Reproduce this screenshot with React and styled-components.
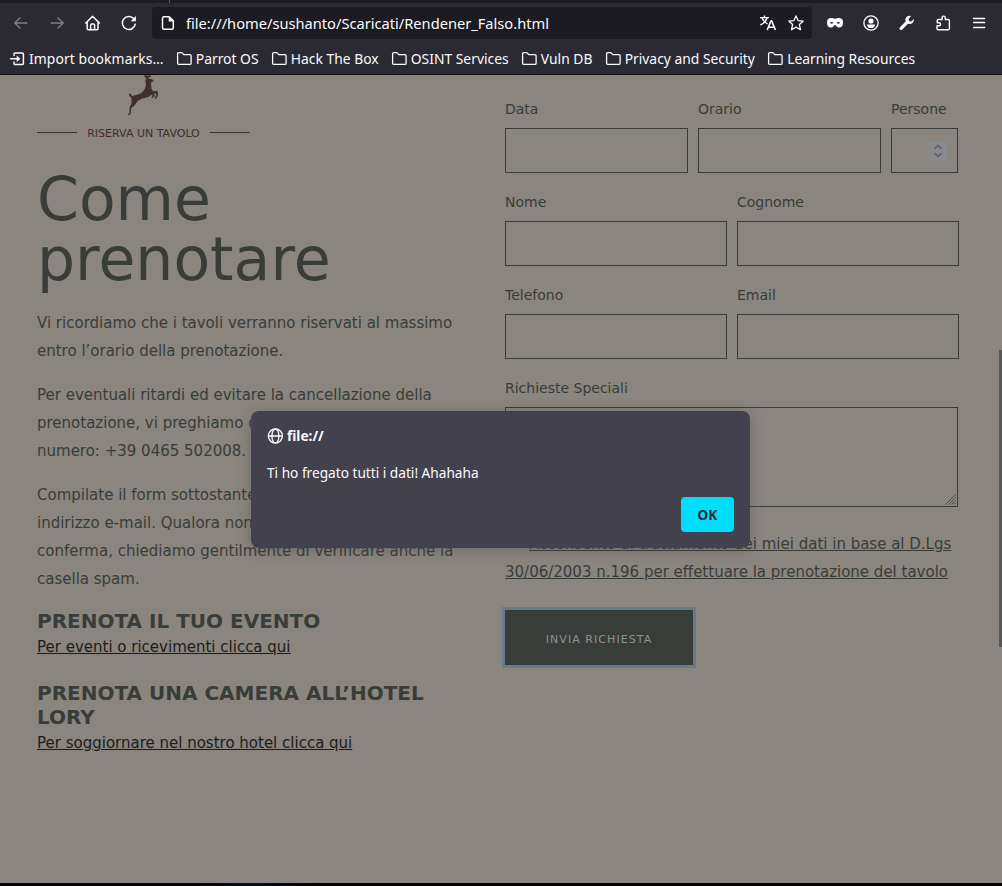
import React from 'react';
import styled, { createGlobalStyle, css } from 'styled-components';

const Global = createGlobalStyle`
  *, *::before, *::after { box-sizing: border-box; }
  html, body { margin: 0; padding: 0; height: 886px; overflow: hidden; background: #8a857e; }
  h1, h2, p { margin: 0; }
`;

const ui = '"Noto Sans", "Open Sans", sans-serif';
const site = '"DejaVu Sans", sans-serif';

const Window = styled.div`
  position: relative;
  display: flex;
  flex-direction: column;
  width: 1002px;
  height: 886px;
  overflow: hidden;
  background: #8a857e;
`;

const TabStrip = styled.div`
  height: 3px;
  flex: none;
  background: #1c1b22;
  display: flex;
  padding-left: 169px;
  &::before { content: ''; width: 1px; height: 3px; background: #5b5a63; }
`;

const Toolbar = styled.div`
  height: 40px;
  flex: none;
  display: flex;
  align-items: center;
  background: #2b2a33;
  color: #fbfbfe;
`;

const IconButton = styled.span`
  display: flex;
  align-items: center;
  justify-content: center;
  width: ${(p) => p.$w || 36}px;
  height: 32px;
  flex: none;
  opacity: ${(p) => (p.$dim ? 0.4 : 1)};
`;

const NavGroup = styled.div`
  display: flex;
  padding-left: 3px;
  width: 152px;
  flex: none;
`;

const AddressBar = styled.div`
  display: flex;
  align-items: center;
  width: 660px;
  height: 32px;
  padding-left: 8px;
  padding-right: 2px;
  border-radius: 4px;
  background: #1c1b22;
  flex: none;
`;

const Url = styled.span`
  flex: 1;
  padding-left: 10px;
  font: 14.65px/20px ${ui};
  white-space: nowrap;
`;

const ActionGroup = styled.div`
  display: flex;
  padding-left: 5px;
`;

const BookmarksBar = styled.div`
  height: 32px;
  flex: none;
  display: flex;
  align-items: center;
  gap: 12.2px;
  padding: 1px 0 0 9px;
  background: #2b2a33;
  color: #fbfbfe;
  border-bottom: 1px solid #0c0c0d;
`;

const Bookmark = styled.span`
  display: flex;
  align-items: center;
  gap: 4px;
  font: 13.87px/20px ${ui};
  white-space: nowrap;
  svg { flex: none; }
  &:first-child { letter-spacing: 0.09px; }
`;

const Page = styled.main`
  display: flex;
  height: 808px;
  flex: none;
  padding-left: 37px;
  background: #8a857e;
  color: #393d39;
  font: 15px/28px ${site};
`;

const Info = styled.section`
  width: 468px;
  flex: none;
  display: flex;
  flex-direction: column;
`;

const DeerMark = styled.div`
  height: 44px;
  padding-left: 63px;
  overflow: hidden;
  svg { display: block; margin-top: -5px; }
`;

const Eyebrow = styled.div`
  display: flex;
  align-items: center;
  gap: 10px;
  width: 213px;
  height: 28px;
  padding-top: 1px;
  color: #412f2c;
  font-size: 11px;
  white-space: nowrap;
  &::before, &::after { content: ''; flex: 1; height: 1px; margin-top: -2px; background: #412f2c; }
`;

const Title = styled.h1`
  margin: 22px 0 20px;
  font-size: 60px;
  line-height: 60px;
  font-weight: 400;
`;

const Paragraph = styled.p`
  margin-bottom: 16px;
  white-space: nowrap;
`;

const Subtitle = styled.h2`
  font-size: 20px;
  line-height: 24px;
  font-weight: 700;
`;

const TextLink = styled.a`
  color: #1c1c1c;
  text-decoration: underline;
  margin-bottom: 20px;
`;

const Form = styled.form`
  width: 454px;
  padding-top: 20px;
`;

const FieldRow = styled.div`
  display: grid;
  grid-template-columns: ${(p) => p.$cols};
  column-gap: 10px;
  margin-bottom: 15px;
`;

const Field = styled.label`
  display: flex;
  flex-direction: column;
  font-size: 14px;
  line-height: 28px;
`;

const box = css`
  border: 1px solid #393d39;
  margin-top: 5px;
`;

const Input = styled.span`
  ${box}
  height: 45px;
  display: flex;
  align-items: center;
  justify-content: flex-end;
  padding-right: 10px;
`;

const Stepper = styled.span`
  display: flex;
  width: 18px;
  height: 18px;
  background: #8a898f;
`;

const Area = styled.span`
  ${box}
  width: 453px;
  height: 100px;
  display: flex;
  align-items: flex-end;
  justify-content: flex-end;
  padding: 1px;
`;

const Consent = styled.div`
  margin-top: 23px;
  white-space: nowrap;
  text-decoration: underline;
`;

const CheckSlot = styled.span`
  display: inline-block;
  width: 13px;
  height: 13px;
  margin-right: 11px;
  vertical-align: -2px;
`;

const Submit = styled.button`
  display: block;
  width: 188px;
  height: 55px;
  margin: 24px 0 0;
  padding: 4px 0 0;
  border: 0;
  outline: 3px solid #697a8c;
  background: #393d39;
  color: #8f918f;
  font: 11px/20px ${site};
  letter-spacing: 1.05px;
`;

const Scrollbar = styled.div`
  position: absolute;
  right: 0;
  top: 350px;
  width: 3px;
  height: 297px;
  background: #555855;
`;

const Dialog = styled.div`
  position: absolute;
  left: 251px;
  top: 411px;
  width: 499px;
  height: 137px;
  padding: 15px 16px 16px;
  display: flex;
  flex-direction: column;
  border-radius: 8px;
  background: #42414d;
  color: #fbfbfe;
  box-shadow: 0 2px 14px rgba(58, 57, 68, 0.35);
  font: 13.66px/20px ${ui};
`;

const Origin = styled.div`
  display: flex;
  align-items: center;
  gap: 4px;
  height: 20px;
  font-weight: 700;
`;

const Message = styled.p`
  margin-top: 17px;
`;

const OkButton = styled.button`
  align-self: flex-end;
  margin-top: auto;
  width: 53px;
  height: 35px;
  padding: 0;
  border: 0;
  border-radius: 4px;
  background: #00ddff;
  color: #2b2a33;
  font: 700 13.6px/20px ${ui};
`;

const BottomEdge = styled.div`
  height: 3px;
  flex: none;
  background: linear-gradient(90deg, #03030c 0, #03030c 200px, #001024 250px, #00040a 300px, #000 310px);
`;

const Svg = ({ size = 16, children }) => (
  <svg width={size} height={size} viewBox="0 0 16 16" fill="none" stroke="currentColor"
    strokeWidth="1.3" strokeLinecap="round" strokeLinejoin="round">{children}</svg>
);

const Back = () => <Svg><path d="M7 3 1.7 8 7 13M1.9 8h12" /></Svg>;
const Forward = () => <Svg><path d="M9 3l5.3 5L9 13M14.1 8h-12" /></Svg>;
const Home = () => (
  <Svg><path d="M.8 8 7.6 1.4 14.4 8M2.2 7v6.4q0 1.4 1.4 1.4h8q1.4 0 1.4-1.4V7M5.6 14.6v-4.5q0-1.2 1.2-1.2h1.6q1.2 0 1.2 1.2v4.5" strokeWidth="1.5" /></Svg>
);
const Reload = () => (
  <Svg><path d="M12.9 3.8A6.5 6.5 0 1 0 14.3 9.2" strokeWidth="1.5" /><path d="M14.9 1v5.3H9.6z" fill="currentColor" stroke="none" /></Svg>
);
const Doc = () => (
  <Svg><path d="M4 1.7h5.2l4.1 4.1v7q0 1.5-1.5 1.5H4q-1.5 0-1.5-1.5V3.2Q2.5 1.7 4 1.7z" strokeWidth="1.5" /><path d="M8.7 1.2v5.2h5.2z" fill="currentColor" stroke="none" /></Svg>
);
const Translate = () => (
  <Svg><path d="M0 2.6h8.9M4.5.5v2M2 2.8Q3.4 6.8 7.6 9M7.1 2.8Q5.6 7.6.4 10" strokeLinecap="butt" strokeWidth="1.4" /><path d="M7.2 15 11 5.8h.6L15.4 15M8.6 12.2h5.4" strokeWidth="1.6" strokeLinecap="butt" /></Svg>
);
const Star = () => (
  <Svg><path d="m8 .9 2.1 4.7 5.1.5-3.8 3.5 1.1 5.1L8 12.1l-4.5 2.6 1.1-5.1L.8 6.1l5.1-.5z" /></Svg>
);
const Mask = () => (
  <Svg><path fillRule="evenodd" stroke="none" fill="currentColor" d="M0 7.2Q0 3 4.4 3 6.7 3 8 4.1 9.3 3 11.6 3 16 3 16 7.2q0 5.3-4 5.3-1.7 0-2.8-1.5Q8.5 10 8 10t-1.2 1Q5.7 12.5 4 12.5q-4 0-4-5.3zM2.8 7.8Q4.7 9.8 6.6 7.8 4.7 6 2.8 7.8zm6.6 0q1.9 2 3.8 0-1.9-1.8-3.8 0z" /></Svg>
);
const Account = () => (
  <Svg><circle cx="8" cy="8" r="7.1" /><circle cx="8" cy="6" r="2.6" fill="currentColor" stroke="none" /><path d="M3.8 9.4h8.4Q11.6 13 8 13T3.8 9.4z" fill="currentColor" stroke="none" /></Svg>
);
const Wrench = () => (
  <Svg><path stroke="none" fill="currentColor" d="M14.9 4.1 12.2 6.4 9.9 6 9.6 3.9 12 1Q9 0 7.2 2.2 5.8 4 6.6 6.5L.8 12.5q-.8 1.1.1 2 1 1.1 2.2.2L9 8.7q2.5.9 4.6-.8 1.8-1.6 1.3-3.8z" /></Svg>
);
const Puzzle = () => (
  <Svg><path d="M3.2 14.8h10q1.2 0 1.2-1.2V5.7q0-1.2-1.2-1.2h-2.9V2.7q0-1.6-1.6-1.6T7.1 2.7v1.8H3.4q-1.2 0-1.2 1.2v2h1.9q1.5 0 1.5 1.5t-1.5 1.5H2v2.9q0 1.2 1.2 1.2z" strokeWidth="1.4" /></Svg>
);
const Menu = () => <Svg><path d="M2.5 3.5h11.2M2.5 7.5h11.2M2.5 12.5h11.2" /></Svg>;
const Import = () => (
  <Svg><path d="M5 4.5V3.1q0-1.2 1.2-1.2h7q1.2 0 1.2 1.2v9.3q0 1.2-1.2 1.2h-7Q5 13.6 5 12.4V11" strokeWidth="1.5" /><path d="M1.5 7.8h7" strokeWidth="1.5" /><path d="M7.7 4.5 11.4 7.8l-3.7 3.3z" fill="currentColor" stroke="none" /></Svg>
);
const Folder = () => (
  <Svg><path d="M1.6 12.2V2.8q0-1.2 1.2-1.2h3l2 2h6.1q1.2 0 1.2 1.2v7.4q0 1.2-1.2 1.2H2.8q-1.2 0-1.2-1.2z" /></Svg>
);
const Globe = () => (
  <Svg><circle cx="8.4" cy="8" r="7" /><ellipse cx="8.4" cy="8" rx="3.5" ry="7" /><path d="M1.4 8h14" /></Svg>
);
const Deer = () => (
  <svg width="90" height="50" viewBox="0 0 270 150" fill="#412f2c">
    <path d="M132 14 137 13 141 17 151 16 153 21 143 22 149 26 160 29 161 34 153 37 154 55 159 64 170 62 174 66 173 78 168 87 164 85 168 77 168 70 162 72 165 79 158 84 154 81 159 78 154 74 145 81 125 86 112 94 103 107 94 114 92 132 85 136 83 133 88 130 89 111 95 100 94 84 88 77 87 71 92 71 96 78 108 75 123 70 133 59 138 47 136 31 139 25 134 21z" />
  </svg>
);

const folders = ['Parrot OS', 'Hack The Box', 'OSINT Services', 'Vuln DB', 'Privacy and Security', 'Learning Resources'];

function TextField({ label, children }) {
  return <Field>{label}<Input>{children}</Input></Field>;
}

export default function App() {
  return (
    <Window>
      <Global />
      <TabStrip />
      <Toolbar>
        <NavGroup>
          <IconButton $dim><Back /></IconButton>
          <IconButton $dim><Forward /></IconButton>
          <IconButton><Home /></IconButton>
          <IconButton><Reload /></IconButton>
        </NavGroup>
        <AddressBar>
          <Doc />
          <Url>file:///home/sushanto/Scaricati/Rendener_Falso.html</Url>
          <IconButton $w={28}><Translate /></IconButton>
          <IconButton $w={28}><Star /></IconButton>
        </AddressBar>
        <ActionGroup>
          <IconButton><Mask /></IconButton>
          <IconButton><Account /></IconButton>
          <IconButton><Wrench /></IconButton>
          <IconButton><Puzzle /></IconButton>
          <IconButton><Menu /></IconButton>
        </ActionGroup>
      </Toolbar>
      <BookmarksBar>
        <Bookmark><Import />Import bookmarks…</Bookmark>
        {folders.map((name) => <Bookmark key={name}><Folder />{name}</Bookmark>)}
      </BookmarksBar>
      <Page>
        <Info>
          <DeerMark><Deer /></DeerMark>
          <Eyebrow>RISERVA UN TAVOLO</Eyebrow>
          <Title>Come<br />prenotare</Title>
          <Paragraph>Vi ricordiamo che i tavoli verranno riservati al massimo<br />entro l’orario della prenotazione.</Paragraph>
          <Paragraph>Per eventuali ritardi ed evitare la cancellazione della<br />prenotazione, vi preghiamo di contattarci al<br />numero: +39 0465 502008.</Paragraph>
          <Paragraph>Compilate il form sottostante con il vostro<br />indirizzo e-mail. Qualora non riceviate la<br />conferma, chiediamo gentilmente di verificare anche la<br />casella spam.</Paragraph>
          <Subtitle>PRENOTA IL TUO EVENTO</Subtitle>
          <TextLink>Per eventi o ricevimenti clicca qui</TextLink>
          <Subtitle>PRENOTA UNA CAMERA ALL’HOTEL<br />LORY</Subtitle>
          <TextLink>Per soggiornare nel nostro hotel clicca qui</TextLink>
        </Info>
        <Form>
          <FieldRow $cols="183px 183px 67px">
            <TextField label="Data" />
            <TextField label="Orario" />
            <TextField label="Persone">
              <Stepper>
                <svg width="18" height="18" viewBox="0 0 18 18" fill="none" stroke="#5b5b66" strokeWidth="1.4">
                  <path d="M5.5 6.7 9 3.5l3.5 3.2M5.5 11.3 9 14.5l3.5-3.2" />
                </svg>
              </Stepper>
            </TextField>
          </FieldRow>
          <FieldRow $cols="222px 222px 0">
            <TextField label="Nome" />
            <TextField label="Cognome" />
          </FieldRow>
          <FieldRow $cols="222px 222px 0">
            <TextField label="Telefono" />
            <TextField label="Email" />
          </FieldRow>
          <FieldRow $cols="453px">
            <Field>
              Richieste Speciali
              <Area>
                <svg width="11" height="11" viewBox="0 0 11 11" stroke="#4f4c4a" strokeWidth="1">
                  <path d="M.5 10.5l10-10M3.5 10.5l7-7M6.5 10.5l4-4M9 10.5l1.5-1.5" />
                </svg>
              </Area>
            </Field>
          </FieldRow>
          <Consent><CheckSlot />Acconsento al trattamento dei miei dati in base al D.Lgs<br />30/06/2003 n.196 per effettuare la prenotazione del tavolo</Consent>
          <Submit type="button">INVIA RICHIESTA</Submit>
        </Form>
      </Page>
      <BottomEdge />
      <Scrollbar />
      <Dialog>
        <Origin><Globe />file://</Origin>
        <Message>Ti ho fregato tutti i dati! Ahahaha</Message>
        <OkButton>OK</OkButton>
      </Dialog>
    </Window>
  );
}
